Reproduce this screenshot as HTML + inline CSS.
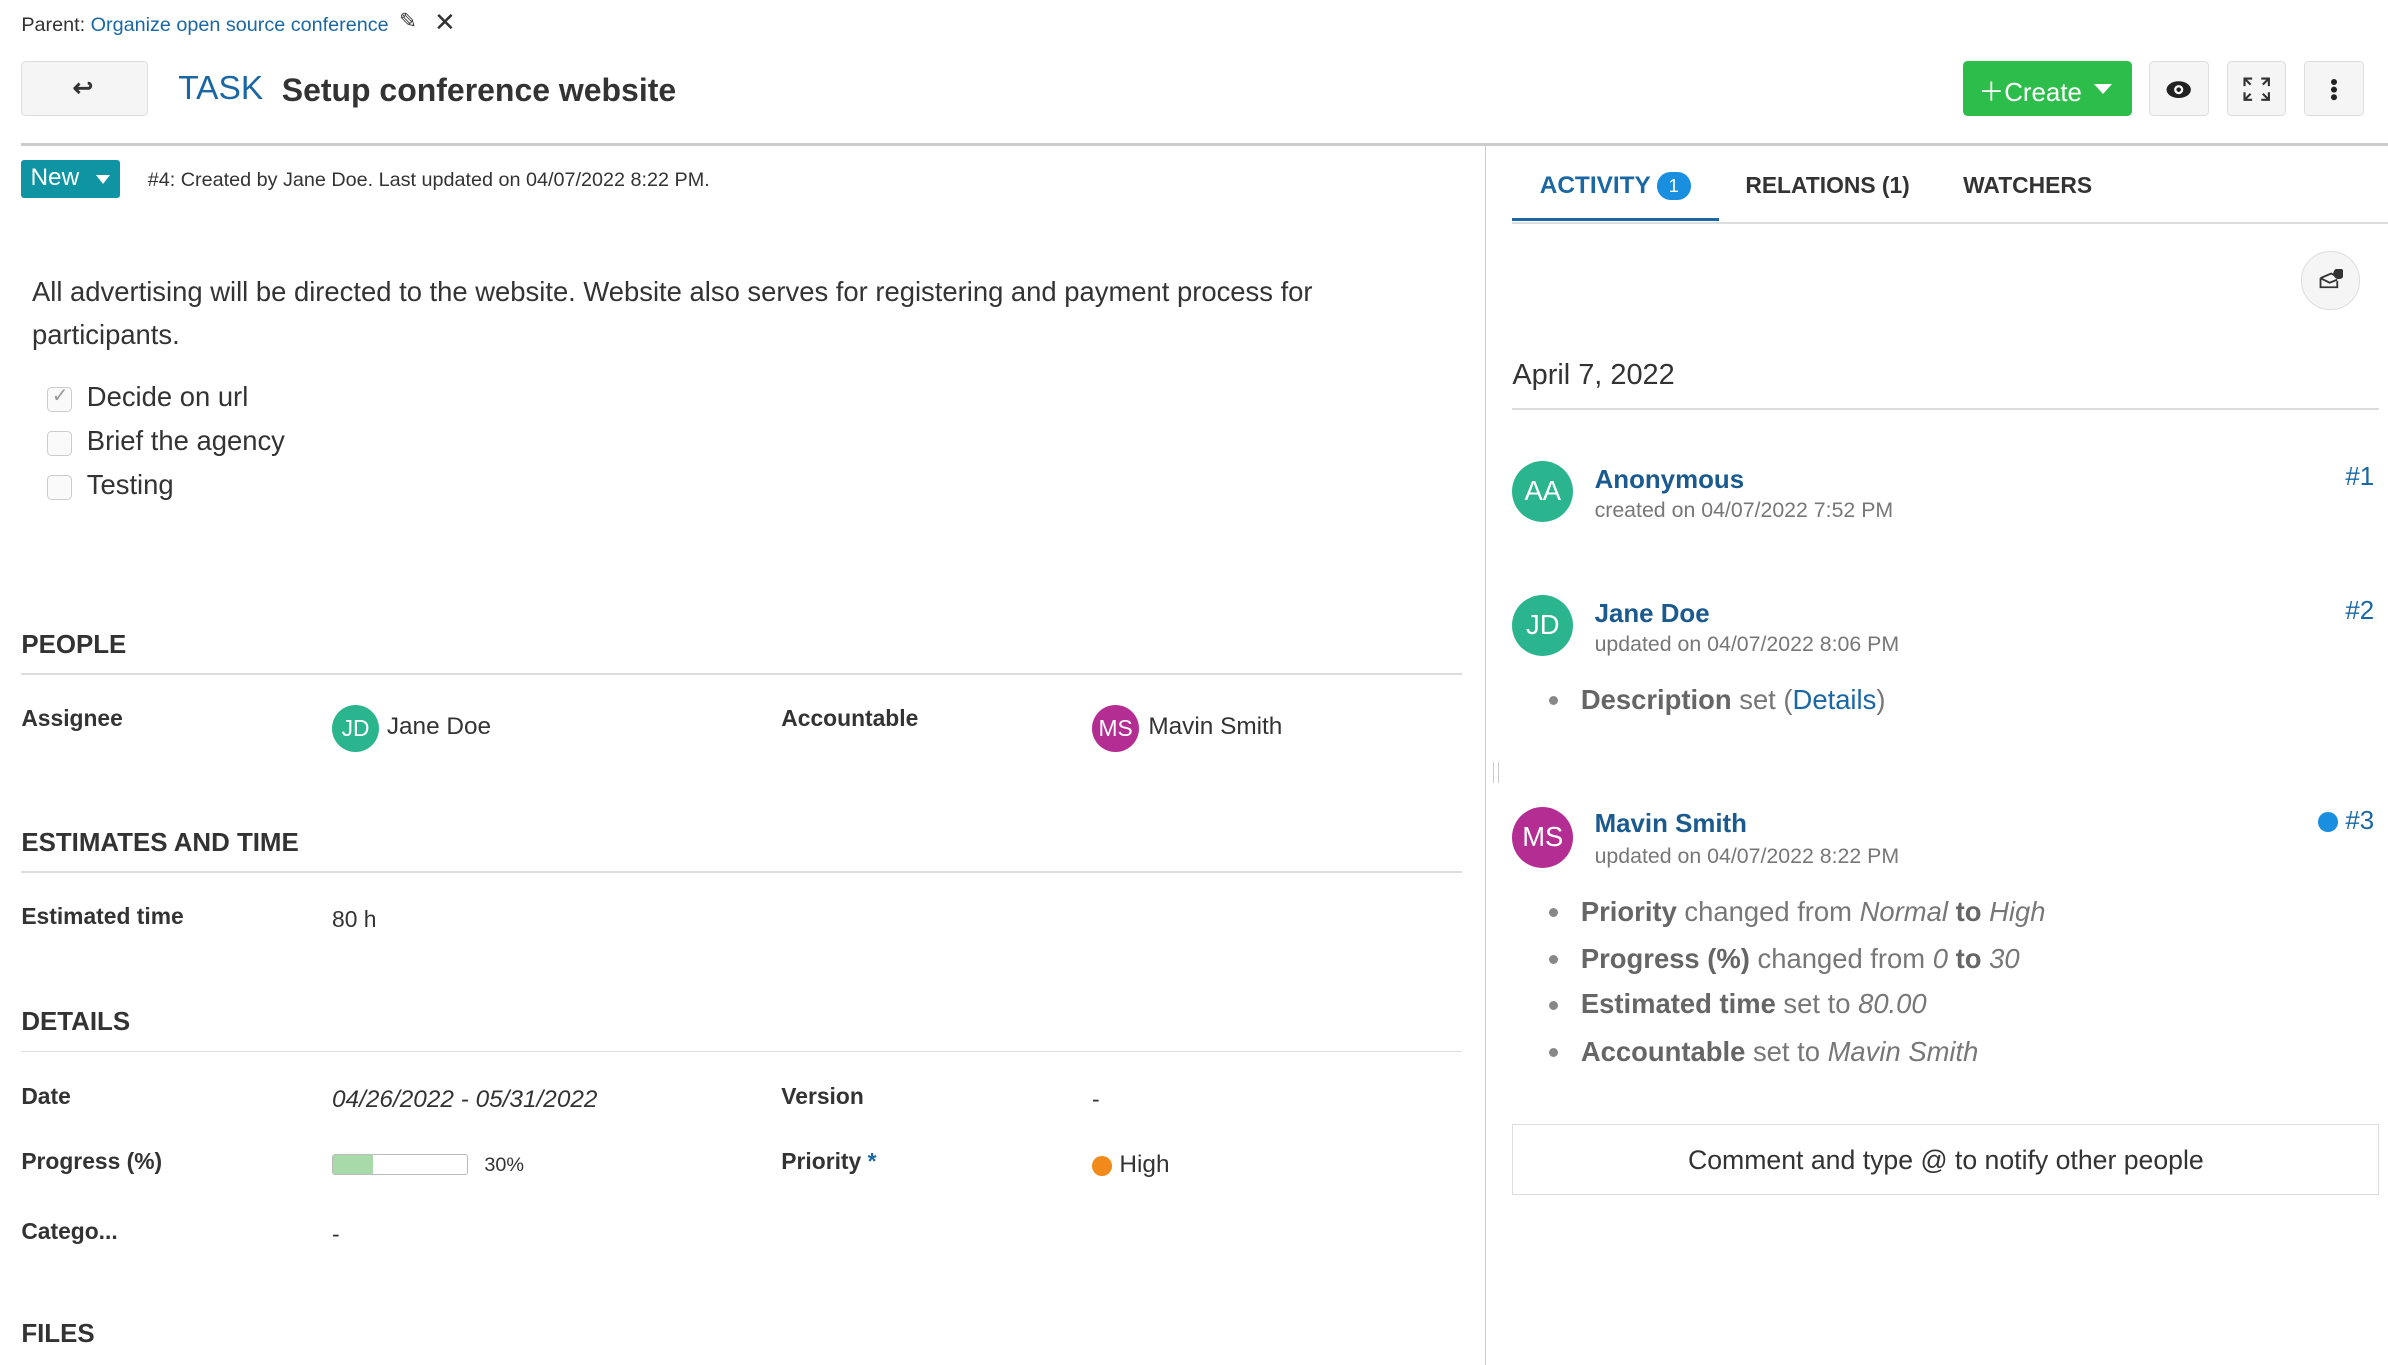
<!DOCTYPE html>
<html><head><meta charset="utf-8"><style>
html,body{margin:0;padding:0;background:#fff;overflow:hidden}
#r{zoom:1.523;width:1568px;height:896px;position:relative;font-family:"Liberation Sans",sans-serif;color:#333}
.a{position:absolute;white-space:nowrap}
.blue{color:#1a67a3}
.btn{position:absolute;border:1px solid #ddd;background:#f5f5f5;border-radius:3px}
.h{font-size:17px;color:#333;font-weight:bold}
.hr{position:absolute;height:1px;background:#ddd}
.lab{font-size:15px;font-weight:bold;color:#333}
.val{font-size:15px;color:#333}
.av{position:absolute;border-radius:50%;color:#fff;text-align:center;font-size:15px}
.cb{position:absolute;width:15px;height:15px;border:1px solid #ccc;border-radius:3px;background:#fafafa}
.li{font-size:18px;color:#777}
.li b{color:#666}
.dot{position:absolute;width:6px;height:6px;border-radius:50%;background:#888}
</style></head><body><div id="r">
<div class="a" style="left:14px;top:9px;font-size:13px">Parent: <span class="blue">Organize open source conference</span></div>
<div class="a" style="left:262px;top:6px;font-size:14px">✎</div>
<div class="a" style="left:285px;top:5px;font-size:17px">✕</div>
<div class="btn" style="left:14px;top:40px;width:82px;height:35px"><div class="a" style="left:33px;top:7px;font-size:16px;font-weight:bold">↩</div></div>
<div class="a" style="left:117px;top:46px;font-size:22px;color:#1a67a3;font-weight:500">TASK</div>
<div class="a" style="left:185px;top:47px;font-size:21px;font-weight:bold;color:#333">Setup conference website</div>
<div class="a" style="left:1289px;top:40px;width:111px;height:36px;background:#2dbd4a;border-radius:3px;color:#fff"><div class="a" style="left:10px;top:7px;font-size:17px">＋Create</div><div class="a" style="left:86px;top:15px;width:0;height:0;border-left:6px solid transparent;border-right:6px solid transparent;border-top:7px solid #fff"></div></div>
<div class="btn" style="left:1411px;top:40px;width:38px;height:35px"><svg style="position:absolute;left:10px;top:11px" width="18" height="14" viewBox="0 0 18 14"><ellipse cx="9" cy="7" rx="8" ry="5.5" fill="#222"/><circle cx="9" cy="7" r="3" fill="#fff"/><circle cx="9" cy="7" r="1.5" fill="#222"/></svg></div>
<div class="btn" style="left:1462px;top:40px;width:38px;height:35px"><svg style="position:absolute;left:10px;top:10px" width="18" height="16" viewBox="0 0 18 16" fill="none" stroke="#333" stroke-width="1.4"><path d="M1 6V1h5M1 1l4 4M17 6V1h-5M17 1l-4 4M1 10v5h5M1 15l4-4M17 10v5h-5M17 15l-4-4"/></svg></div>
<div class="btn" style="left:1513px;top:40px;width:38px;height:35px"><div class="a" style="left:17px;top:11px;width:4px;height:4px;border-radius:50%;background:#222;box-shadow:0 5px 0 #222,0 10px 0 #222"></div></div>
<div class="hr" style="left:14px;top:94px;width:1554px;height:2px;background:#ccc"></div>
<div class="a" style="left:975px;top:96px;width:1px;height:800px;background:#ccc"></div>
<div class="a" style="left:14px;top:105px;width:65px;height:25px;background:#0f94a4;border-radius:2px;color:#fff"><div class="a" style="left:6px;top:3px;font-size:16px">New</div><div class="a" style="left:49px;top:10px;border-left:5px solid transparent;border-right:5px solid transparent;border-top:6px solid #fff"></div></div>
<div class="a" style="left:97px;top:111px;font-size:13px">#4: Created by Jane Doe. Last updated on 04/07/2022 8:22 PM.</div>
<div class="a" style="left:21px;top:178px;font-size:18px;line-height:28px;white-space:normal;width:900px">All advertising will be directed to the website. Website also serves for registering and payment process for participants.</div>
<div class="cb" style="left:31px;top:254px"></div><div class="a" style="left:34px;top:252px;font-size:13px;color:#999">✓</div>
<div class="a" style="left:57px;top:250px;font-size:18px">Decide on url</div>
<div class="cb" style="left:31px;top:283px"></div><div class="a" style="left:57px;top:279px;font-size:18px">Brief the agency</div>
<div class="cb" style="left:31px;top:312px"></div><div class="a" style="left:57px;top:308px;font-size:18px">Testing</div>
<div class="a h" style="left:14px;top:414px">PEOPLE</div><div class="hr" style="left:14px;top:442px;width:946px"></div>
<div class="a lab" style="left:14px;top:463px">Assignee</div>
<div class="av" style="left:218px;top:463px;width:31px;height:31px;line-height:31px;background:#2bb58e">JD</div>
<div class="a val" style="left:254px;top:468px;font-size:16px">Jane Doe</div>
<div class="a lab" style="left:513px;top:463px">Accountable</div>
<div class="av" style="left:717px;top:463px;width:31px;height:31px;line-height:31px;background:#b42d93">MS</div>
<div class="a val" style="left:754px;top:468px;font-size:16px">Mavin Smith</div>
<div class="a h" style="left:14px;top:544px">ESTIMATES AND TIME</div><div class="hr" style="left:14px;top:572px;width:946px"></div>
<div class="a lab" style="left:14px;top:593px">Estimated time</div><div class="a val" style="left:218px;top:595px">80 h</div>
<div class="a h" style="left:14px;top:662px">DETAILS</div><div class="hr" style="left:14px;top:690px;width:946px"></div>
<div class="a lab" style="left:14px;top:711px">Date</div><div class="a val" style="left:218px;top:713px;font-style:italic;font-size:16px">04/26/2022 - 05/31/2022</div>
<div class="a lab" style="left:513px;top:711px">Version</div><div class="a val" style="left:717px;top:713px">-</div>
<div class="a lab" style="left:14px;top:754px">Progress (%)</div>
<div class="a" style="left:218px;top:758px;width:88px;height:12px;border:1px solid #bbb;border-radius:2px"><div style="width:26px;height:12px;background:#a8d9a8"></div></div>
<div class="a val" style="left:318px;top:758px;font-size:13px">30%</div>
<div class="a lab" style="left:513px;top:754px">Priority <span class="blue">*</span></div>
<div class="a" style="left:717px;top:759px;width:13px;height:13px;border-radius:50%;background:#f18a1a"></div>
<div class="a val" style="left:735px;top:756px;font-size:16px">High</div>
<div class="a lab" style="left:14px;top:800px">Catego...</div><div class="a val" style="left:218px;top:802px">-</div>
<div class="a h" style="left:14px;top:867px">FILES</div>
<div class="a" style="left:1011px;top:113px;font-size:16px;color:#1a67a3;font-weight:bold">ACTIVITY</div>
<div class="a" style="left:1088px;top:113px;width:22px;height:18px;border-radius:9px;background:#1a8fe0;color:#fff;font-size:12px;text-align:center;line-height:18px">1</div>
<div class="hr" style="left:993px;top:143px;width:136px;height:2px;background:#1a67a3"></div>
<div class="a" style="left:1146px;top:113px;font-size:15px;font-weight:bold">RELATIONS (1)</div>
<div class="a" style="left:1289px;top:113px;font-size:15px;font-weight:bold">WATCHERS</div>
<div class="hr" style="left:993px;top:146px;width:575px"></div>
<div class="a" style="left:1511px;top:165px;width:37px;height:37px;border-radius:50%;border:1px solid #ddd;background:#f5f5f5"><svg style="position:absolute;left:11px;top:11px" width="16" height="14" viewBox="0 0 16 14" fill="none" stroke="#333" stroke-width="1.2"><path d="M1 6l7-3 4 2M1 6v6h11V8M1 6l6 3 5-2"/><circle cx="13" cy="3" r="3" fill="#333"/></svg></div>
<div class="a" style="left:993px;top:236px;font-size:19px">April 7, 2022</div>
<div class="hr" style="left:993px;top:268px;width:569px"></div>
<div class="av" style="left:993px;top:303px;width:40px;height:40px;line-height:40px;font-size:18px;background:#2bb58e">AA</div>
<div class="a" style="left:1047px;top:306px;font-size:17px;font-weight:bold;color:#1a5a8e">Anonymous</div>
<div class="a" style="left:1047px;top:327px;font-size:14px;color:#777">created on 04/07/2022 7:52 PM</div>
<div class="a blue" style="left:1540px;top:304px;font-size:17px">#1</div>
<div class="av" style="left:993px;top:391px;width:40px;height:40px;line-height:40px;font-size:18px;background:#2bb58e">JD</div>
<div class="a" style="left:1047px;top:394px;font-size:17px;font-weight:bold;color:#1a5a8e">Jane Doe</div>
<div class="a" style="left:1047px;top:415px;font-size:14px;color:#777">updated on 04/07/2022 8:06 PM</div>
<div class="a blue" style="left:1540px;top:392px;font-size:17px">#2</div>
<div class="dot" style="left:1017px;top:457px"></div>
<div class="a li" style="left:1038px;top:449px"><b>Description</b> set (<span class="blue">Details</span>)</div>
<div class="av" style="left:993px;top:530px;width:40px;height:40px;line-height:40px;font-size:18px;background:#b42d93">MS</div>
<div class="a" style="left:1047px;top:532px;font-size:17px;font-weight:bold;color:#1a5a8e">Mavin Smith</div>
<div class="a" style="left:1047px;top:554px;font-size:14px;color:#777">updated on 04/07/2022 8:22 PM</div>
<div class="a" style="left:1522px;top:533px;width:13px;height:13px;border-radius:50%;background:#1a8fe0"></div>
<div class="a blue" style="left:1540px;top:530px;font-size:17px">#3</div>
<div class="dot" style="left:1017px;top:596px"></div><div class="a li" style="left:1038px;top:588px"><b>Priority</b> changed from <i>Normal</i> <b>to</b> <i>High</i></div>
<div class="dot" style="left:1017px;top:627px"></div><div class="a li" style="left:1038px;top:619px"><b>Progress (%)</b> changed from <i>0</i> <b>to</b> <i>30</i></div>
<div class="dot" style="left:1017px;top:657px"></div><div class="a li" style="left:1038px;top:649px"><b>Estimated time</b> set to <i>80.00</i></div>
<div class="dot" style="left:1017px;top:688px"></div><div class="a li" style="left:1038px;top:680px"><b>Accountable</b> set to <i>Mavin Smith</i></div>
<div class="a" style="left:993px;top:738px;width:568px;height:45px;border:1px solid #ddd;text-align:center;line-height:47px;font-size:17.5px">Comment and type @ to notify other people</div>
<div class="a" style="left:980px;top:500px;width:3px;height:14px;border-left:1px solid #ccc;border-right:1px solid #ccc"></div>
</div></body></html>
